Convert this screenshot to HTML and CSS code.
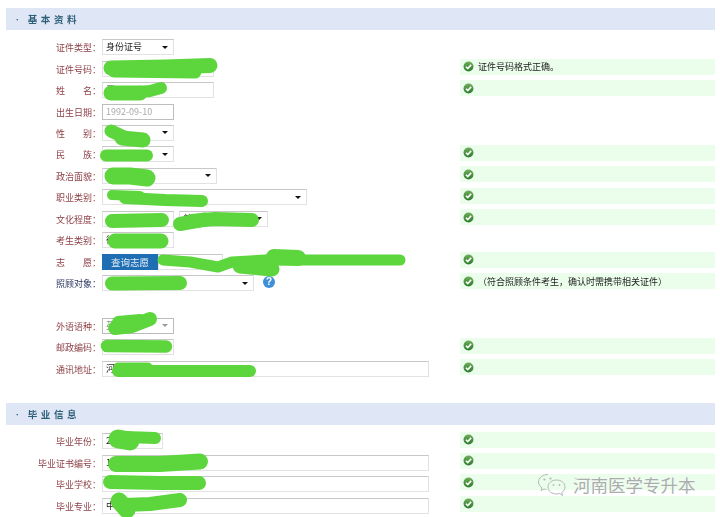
FILE: index.html
```html
<!DOCTYPE html>
<html lang="zh">
<head>
<meta charset="utf-8">
<title>基本资料</title>
<link rel="stylesheet" href="styles.css">
</head>
<body>
<svg class="defs" width="0" height="0" aria-hidden="true">
  <defs>
    <linearGradient id="ok" x1="0" y1="0" x2="0" y2="1"><stop offset="0" stop-color="#6fae5c"/><stop offset="1" stop-color="#2c7a2c"/></linearGradient>
    <symbol id="check" viewBox="0 0 12 12">
      <circle cx="6" cy="6" r="5.4" fill="url(#ok)"/>
      <path d="M3.2 6.2 5.2 8.2 8.9 4.2" fill="none" stroke="#fff" stroke-width="1.7"/>
    </symbol>
  </defs>
</svg>
<main class="page">
  <h2 class="section"><span class="dot">·</span>基本资料</h2>
  <div class="rows">
    <div class="row"><span class="label">证件类型：</span><div class="field"><div class="sel w72"><span>身份证号</span></div></div></div>
    <div class="row"><span class="label">证件号码：</span><div class="field"><div class="inp w112"></div></div><div class="tip"><svg class="ok"><use href="#check"/></svg><span>证件号码格式正确。</span></div></div>
    <div class="row"><span class="label">姓　　名：</span><div class="field"><div class="inp w112">武</div></div><div class="tip"><svg class="ok"><use href="#check"/></svg></div></div>
    <div class="row"><span class="label">出生日期：</span><div class="field"><div class="inp w72 date">1992-09-10</div></div></div>
    <div class="row"><span class="label">性　　别：</span><div class="field"><div class="sel w72"></div></div></div>
    <div class="row"><span class="label">民　　族：</span><div class="field"><div class="sel w72"></div></div><div class="tip"><svg class="ok"><use href="#check"/></svg></div></div>
    <div class="row"><span class="label">政治面貌：</span><div class="field"><div class="sel w115"></div></div><div class="tip"><svg class="ok"><use href="#check"/></svg></div></div>
    <div class="row"><span class="label">职业类别：</span><div class="field"><div class="sel w205"></div></div><div class="tip"><svg class="ok"><use href="#check"/></svg></div></div>
    <div class="row"><span class="label">文化程度：</span><div class="field"><div class="sel w72"></div><div class="sel w89"><span>普</span></div></div><div class="tip"><svg class="ok"><use href="#check"/></svg></div></div>
    <div class="row"><span class="label">考生类别：</span><div class="field"><div class="sel w72"><span>往</span></div></div></div>
    <div class="row"><span class="label">志　　愿：</span><div class="field joined"><div class="btn">查询志愿</div><div class="inp w65"></div></div><div class="tip"><svg class="ok"><use href="#check"/></svg></div></div>
    <div class="row"><span class="label dark">照顾对象：</span><div class="field"><div class="sel w152"></div><span class="help">?</span></div><div class="tip"><svg class="ok"><use href="#check"/></svg><span>（符合照顾条件考生，确认时需携带相关证件）</span></div></div>
    <div class="row"></div>
    <div class="row"><span class="label">外语语种：</span><div class="field"><div class="sel w72 off"><span>英</span></div></div></div>
    <div class="row"><span class="label">邮政编码：</span><div class="field"><div class="inp w72"></div></div><div class="tip"><svg class="ok"><use href="#check"/></svg></div></div>
    <div class="row"><span class="label">通讯地址：</span><div class="field"><div class="inp w327">河</div></div><div class="tip"><svg class="ok"><use href="#check"/></svg></div></div>
  </div>
  <h2 class="section second"><span class="dot">·</span>毕业信息</h2>
  <div class="rows">
    <div class="row"><span class="label">毕业年份：</span><div class="field"><div class="inp w61">2</div></div><div class="tip"><svg class="ok"><use href="#check"/></svg></div></div>
    <div class="row"><span class="label">毕业证书编号：</span><div class="field"><div class="inp w327">1</div></div><div class="tip"><svg class="ok"><use href="#check"/></svg></div></div>
    <div class="row"><span class="label">毕业学校：</span><div class="field"><div class="inp w327"></div></div><div class="tip"><svg class="ok"><use href="#check"/></svg></div></div>
    <div class="row"><span class="label">毕业专业：</span><div class="field"><div class="inp w327">中</div></div><div class="tip"><svg class="ok"><use href="#check"/></svg></div></div>
  </div>
</main>
<svg class="scribbles" viewBox="0 0 720 517" aria-hidden="true">
  <g fill="none" stroke="#5dd63e" stroke-linecap="round" stroke-linejoin="round">
    <path stroke-width="15" d="M111 68 L165 67 L210 65.500"/>
    <path stroke-width="13" d="M114 71 L195 72"/>
    <path stroke-width="15" d="M111 93 L140 93"/>
    <path stroke-width="12" d="M125 93 L150 91 L161 88"/>
    <path stroke-width="13" d="M111 131 L124 137"/>
    <path stroke-width="15" d="M122 138 L143 140"/>
    <path stroke-width="12" d="M106 155.500 L147 155.500"/>
    <path stroke-width="17" d="M113 176 L130 176 L147 178"/>
    <path stroke-width="10" d="M112 195 L140 196"/>
    <path stroke-width="12" d="M125 198 L165 200 L202 201"/>
    <path stroke-width="14" d="M112 221 L162 220"/>
    <path stroke-width="14" d="M180 224 L205 219.500"/>
    <path stroke-width="14" d="M192 221 L215 219 L252 220"/>
    <path stroke-width="15" d="M115 241 L161 241"/>
    <path stroke-width="11" d="M163 260 L190 262 L218 267 L232 262 L265 260 L400 260"/>
    <path stroke-width="15" d="M240 266 L272 269"/>
    <path stroke-width="16" d="M274 257 L298 258"/>
    <path stroke-width="14" d="M112 283.500 L180 283"/>
    <path stroke-width="14" d="M115 328 L132 326 L150 319"/>
    <path stroke-width="12" d="M118 322 L140 320"/>
    <path stroke-width="12.500" d="M107 346 L166 346.500"/>
    <path stroke-width="12" d="M118 371 L250 371"/>
    <path stroke-width="9" d="M118 367 L148 367"/>
    <path stroke-width="19" d="M118 439 L130 441"/>
    <path stroke-width="12" d="M125 437 L155 438"/>
    <path stroke-width="16" d="M116 464 L160 464 L200 461.500"/>
    <path stroke-width="14" d="M110 482 L160 483 L199 483"/>
    <path stroke-width="17" d="M119 501 L127 510"/>
    <path stroke-width="14" d="M124 505 L150 504 L180 500"/>
  </g>
</svg>
<div class="mark">
  <svg class="mark-icon" viewBox="0 0 30 24" aria-hidden="true">
    <g fill="none" stroke="#b5b8b8" stroke-width="1">
      <path d="M11 1.500C5.500 1.500 1.500 5 1.500 9C1.500 11.500 3 13.500 5 14.800L4 17.500L7.300 16C8 16.300 8.800 16.400 9.500 16.500"/>
      <path d="M19.500 7C14.800 7 11 10 11 14C11 18 14.800 21 19.500 21C20.600 21 21.500 20.800 22.500 20.500L25.500 22.500L24.700 19.500C26.800 18 28 16.200 28 14C28 10 24.200 7 19.500 7Z"/>
    </g>
    <circle cx="7.500" cy="6.500" r="1.100" fill="#b5b8b8"/>
    <circle cx="13.500" cy="5.500" r="1.100" fill="#b5b8b8"/>
    <circle cx="16.500" cy="12" r=".9" fill="#b5b8b8"/>
    <circle cx="22.500" cy="12" r=".9" fill="#b5b8b8"/>
  </svg>
  <span>河南医学专升本</span>
</div>
</body>
</html>
```
FILE: styles.css
```css
* { box-sizing: border-box; }
html, body { margin: 0; height: 517px; overflow: hidden; background: #fff; }
body { position: relative; font-family: "Noto Sans CJK SC", "Liberation Sans", sans-serif; font-size: 9px; }
.defs { display: block; height: 0; }
.page { padding: 8px 5px 0 6px; filter: blur(.4px); }
.section { margin: 0; height: 22px; line-height: 22px; padding-left: 10px; background: #dfe6f5; color: #2f5f78; font-size: 9.500px; font-weight: 700; letter-spacing: 3.600px; }
.dot { font-family: "Liberation Sans", sans-serif; margin-right: 5px; }
.second { margin-top: 23.500px; }
.rows { padding-top: 6.500px; }
.second + .rows { padding-top: 5.500px; }
.row { display: grid; grid-template-columns: 95px 359px 1fr; height: 21.450px; align-items: center; }
.label { grid-column: 1; text-align: right; color: #8c3f45; white-space: nowrap; line-height: 1; padding-top: 1px; }
.label.dark { color: #2b3560; }
.field { grid-column: 2; margin-left: 1px; display: flex; gap: 5px; align-items: center; }
.field.joined { gap: 0; }
.sel, .inp { height: 16px; line-height: 14px; padding: 0 3px; border: 1px solid #e2e2e2; border-top-color: #c8c8c8; color: #222; background: #fff; white-space: nowrap; overflow: hidden; }
.sel { display: flex; justify-content: space-between; align-items: center; padding-right: 5px; }
.sel::after { content: ""; margin-left: auto; border: 3px solid transparent; border-top: 3px solid #111; border-bottom: 0; }
.sel.off { border-color: #bbb; color: #777; }
.sel.off::after { border-top-color: #999; }
.date { border-color: #bdbdbd; color: #aaa; }
.btn { width: 56px; height: 16px; line-height: 16px; background: #1f6db3; color: #e6f0f8; text-align: center; font-size: 9.500px; }
.help { width: 12px; height: 12px; margin-left: 4px; margin-top: -3px; border-radius: 50%; background: #3f90d8; color: #fff; font: 700 10px/12px "Liberation Sans", sans-serif; text-align: center; }
.w61 { width: 61px; }
.w65 { width: 65px; }
.w72 { width: 72px; }
.w89 { width: 89px; }
.w112 { width: 112px; }
.w115 { width: 115px; }
.w152 { width: 152px; }
.w205 { width: 205px; }
.w327 { width: 327px; }
.tip { grid-column: 3; grid-row: 1; align-self: start; margin-top: 1px; height: 16px; background: #ebfdeb; padding-left: 3px; display: flex; align-items: center; gap: 4px; color: #222; white-space: nowrap; }
.ok { width: 11px; height: 11px; flex: none; }
.scribbles { position: absolute; left: 0; top: 0; width: 720px; height: 517px; filter: blur(.5px); }
.mark { position: absolute; left: 537px; top: 473px; display: flex; align-items: center; gap: 6px; color: #a9adad; font-size: 17.500px; line-height: 24px; white-space: nowrap; text-shadow: 0 0 2px #fff; }
.mark-icon { width: 30px; height: 24px; flex: none; }
```
